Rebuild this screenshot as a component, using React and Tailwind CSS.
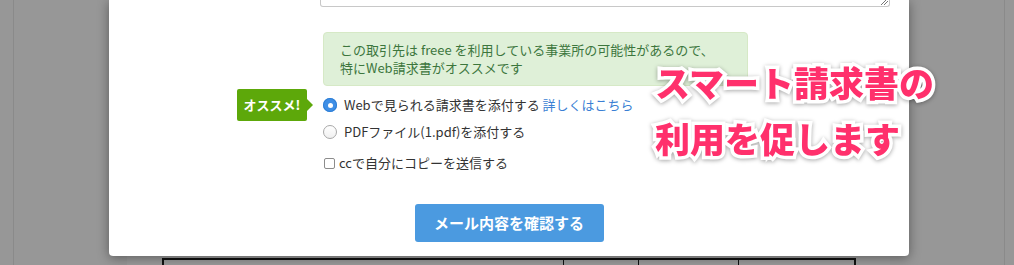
import React from "react";

const jp = { fontFamily: '"Noto Sans CJK JP", "Noto Sans", sans-serif' };

function Radio({ checked }) {
  if (checked) {
    return (
      <span className="flex h-[14px] w-[14px] shrink-0 items-center justify-center rounded-full bg-[#3f8fe6] shadow-[inset_0_0_0_1px_#2f7fd6]">
        <span className="h-[5px] w-[5px] rounded-full bg-white" />
      </span>
    );
  }
  return (
    <span className="h-[14px] w-[14px] shrink-0 rounded-full border border-[#a8a8a8] bg-gradient-to-b from-white to-[#f0f0f0]" />
  );
}

export default function App() {
  return (
    <div
      className="relative h-[265px] w-[1014px] overflow-hidden bg-[#979797] text-[#333]"
      style={jp}
    >
      {/* background page edges */}
      <div className="absolute left-[13px] top-0 h-full w-px bg-[#8a8a8a]" />
      <div className="absolute left-[1004px] top-0 h-full w-px bg-[#8a8a8a]" />
      {/* document behind */}
      <div className="absolute left-[127px] top-0 h-full w-[763px] bg-[#9b9b9b]">
        <div className="absolute left-[35px] top-[258px] flex h-[20px] w-[694px] border-l-2 border-r-2 border-t-2 border-[#111]">
          <div className="w-[400px] border-r border-[#111]" />
          <div className="w-[75px] border-r border-[#111]" />
          <div className="w-[100px] border-r border-[#111]" />
          <div className="flex-1" />
        </div>
      </div>

      {/* modal */}
      <div className="absolute left-[109px] top-0 flex h-[256px] w-[800px] flex-col rounded-b-[4px] bg-white shadow-[0_2px_12px_rgba(0,0,0,0.4)]">
        {/* textarea bottom */}
        <div className="relative ml-[211px] h-[7px] w-[570px] rounded-b-[3px] border-x border-b border-[#c8c8c8]">
          <svg className="absolute bottom-[1px] right-[1px]" width="8" height="7" viewBox="0 0 8 7">
            <path d="M1 7 L8 0 M4 7 L8 3" stroke="#777" strokeWidth="1" fill="none" />
          </svg>
        </div>

        {/* alert */}
        <div className="ml-[214px] mt-[25px] h-[54px] w-[425px] rounded-[4px] border border-[#d6e9c6] bg-[#dff0d8] pl-[16px] pt-[8px] text-[13px] leading-[18px] text-[#3c763d]">
          <p>この取引先は freee を利用している事業所の可能性があるので、</p>
          <p>特にWeb請求書がオススメです</p>
        </div>

        {/* option 1 */}
        <div className="ml-[128px] mt-[3px] flex h-[32px] items-center">
          <div className="flex items-center">
            <div className="flex h-[32px] w-[70px] items-center justify-center rounded-[2px] bg-[#5da80a] text-[13px] font-bold text-white">
              オススメ!
            </div>
            <div className="h-0 w-0 border-y-[6px] border-l-[6px] border-y-transparent border-l-[#5da80a]" />
          </div>
          <label className="ml-[10px] flex items-center gap-[7px] text-[13px]">
            <Radio checked />
            <span>
              Webで見られる請求書を添付する{" "}
              <span className="text-[#3b7fd4]">詳しくはこちら</span>
            </span>
          </label>
        </div>

        {/* option 2 */}
        <label className="ml-[214px] mt-[1px] flex h-[20px] items-center gap-[7px] text-[13px]">
          <Radio />
          <span>PDFファイル(1.pdf)を添付する</span>
        </label>

        {/* checkbox */}
        <label className="ml-[215px] mt-[11px] flex h-[20px] items-center gap-[4px] text-[13px]">
          <span className="h-[11px] w-[11px] shrink-0 rounded-[2px] border border-[#8c8c8c] bg-white" />
          <span>ccで自分にコピーを送信する</span>
        </label>

        {/* button */}
        <div className="mt-[31px] flex justify-center">
          <button className="h-[38px] w-[189px] rounded-[3px] bg-[#4b9ae0] text-[15px] font-bold text-white">
            メール内容を確認する
          </button>
        </div>
      </div>

      {/* annotation */}
      <div className="absolute left-[655px] top-[54px] text-[35px] font-black leading-[56px] text-[#ff306c] [-webkit-text-stroke:7px_white] [paint-order:stroke_fill] drop-shadow-[0_1px_2px_rgba(0,0,0,0.35)]">
        <p>スマート請求書の</p>
        <p>利用を促します</p>
      </div>
    </div>
  );
}
